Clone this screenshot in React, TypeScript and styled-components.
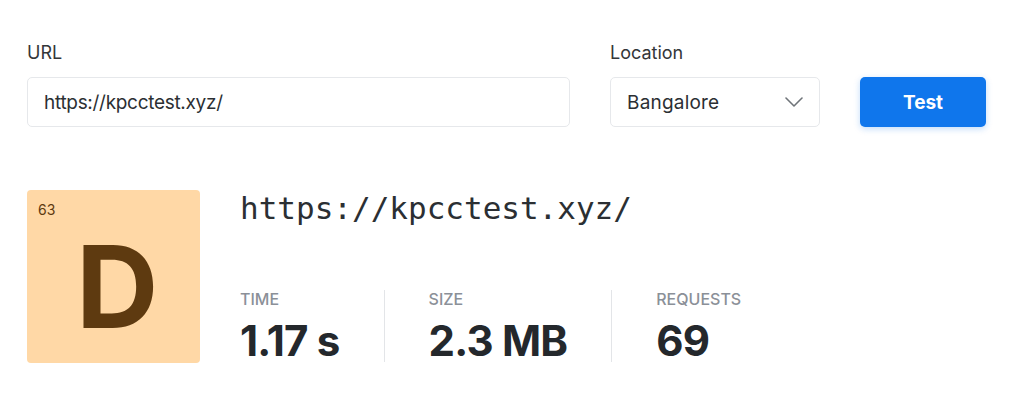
import { FunctionComponent } from "react"
import styled, { createGlobalStyle } from "styled-components"

const GlobalStyle = createGlobalStyle`
    html, body {
        margin: 0;
        padding: 0;
        background: #ffffff;
        font-family: Inter, "Open Sans", "Liberation Sans", sans-serif;
        color: #2b2f33;
    }
`

const Stats = [
    { label: 'TIME', value: '1.17 s' },
    { label: 'SIZE', value: '2.3 MB' },
    { label: 'REQUESTS', value: '69' },
]

const Page = styled.div`
    width: 1024px;
    height: 417px;
    box-sizing: border-box;
    padding: 41px 38px 0 27px;
`
const Form = styled.form`
    display: flex;
    align-items: flex-end;
    gap: 40px;
`
const Field = styled.label<{ $width: number }>`
    display: flex;
    flex-direction: column;
    gap: 12px;
    width: ${p => p.$width}px;
`
const FieldLabel = styled.span`
    font-size: 18px;
    line-height: 24px;
    color: #333639;
`
const Input = styled.div`
    height: 50px;
    box-sizing: border-box;
    border: 1px solid #e6e8eb;
    border-radius: 5px;
    padding: 0 16px;
    display: flex;
    align-items: center;
    font-size: 19px;
    letter-spacing: -0.3px;
    color: #2b2f33;
`
const Select = styled(Input)`
    justify-content: space-between;
    letter-spacing: 0.2px;
`
const TestButton = styled.button`
    width: 126px;
    height: 50px;
    border: none;
    border-radius: 5px;
    background: #0f76ec;
    color: #ffffff;
    font-family: inherit;
    font-size: 19px;
    font-weight: 700;
    box-shadow: 0 2px 6px rgba(15, 118, 236, 0.25);
    cursor: pointer;
`
const Result = styled.div`
    display: flex;
    gap: 40px;
    margin-top: 63px;
`
const GradeBox = styled.div`
    width: 173px;
    height: 173px;
    border-radius: 4px;
    background: #ffd8a6;
    color: #5e3a10;
    display: flex;
    flex-direction: column;
    padding: 12px 0 0 11px;
    box-sizing: border-box;
`
const Score = styled.span`
    font-size: 14px;
    line-height: 16px;
`
const Grade = styled.span`
    font-size: 114px;
    font-weight: 700;
    line-height: 1;
    margin: 12px 0 0 38px;
`
const Details = styled.div`
    display: flex;
    flex-direction: column;
    justify-content: space-between;
`
const Address = styled.div`
    font-family: "DejaVu Sans Mono", "Liberation Mono", monospace;
    font-size: 31px;
    line-height: 36px;
    color: #2b2f33;
`
const StatRow = styled.div`
    display: flex;
    margin-bottom: 1px;
`
const Stat = styled.div`
    display: flex;
    flex-direction: column;
    gap: 12px;
    padding: 0 44px;
    border-left: 1px solid #e3e5e8;

    &:first-child {
        padding-left: 0;
        border-left: none;
    }
`
const StatLabel = styled.span`
    font-size: 16px;
    font-weight: 500;
    color: #8b9098;
    line-height: 18px;
`
const StatValue = styled.span`
    font-size: 42px;
    font-weight: 700;
    letter-spacing: -0.8px;
    color: #24282c;
    line-height: 42px;
`

const Chevron: FunctionComponent = () => (
    <svg width="18" height="10" viewBox="0 0 18 10" fill="none">
        <path d="M1 1l8 8 8-8" stroke="#6f7479" strokeWidth="1.6" strokeLinecap="round" strokeLinejoin="round" />
    </svg>
)

export default function App() {
    return (
        <Page>
            <GlobalStyle />
            <Form>
                <Field $width={543}>
                    <FieldLabel>URL</FieldLabel>
                    <Input>https://kpcctest.xyz/</Input>
                </Field>
                <Field $width={210}>
                    <FieldLabel>Location</FieldLabel>
                    <Select>
                        Bangalore
                        <Chevron />
                    </Select>
                </Field>
                <TestButton type="button">Test</TestButton>
            </Form>
            <Result>
                <GradeBox>
                    <Score>63</Score>
                    <Grade>D</Grade>
                </GradeBox>
                <Details>
                    <Address>https://kpcctest.xyz/</Address>
                    <StatRow>
                        {Stats.map(({ label, value }) => (
                            <Stat key={label}>
                                <StatLabel>{label}</StatLabel>
                                <StatValue>{value}</StatValue>
                            </Stat>
                        ))}
                    </StatRow>
                </Details>
            </Result>
        </Page>
    )
}
